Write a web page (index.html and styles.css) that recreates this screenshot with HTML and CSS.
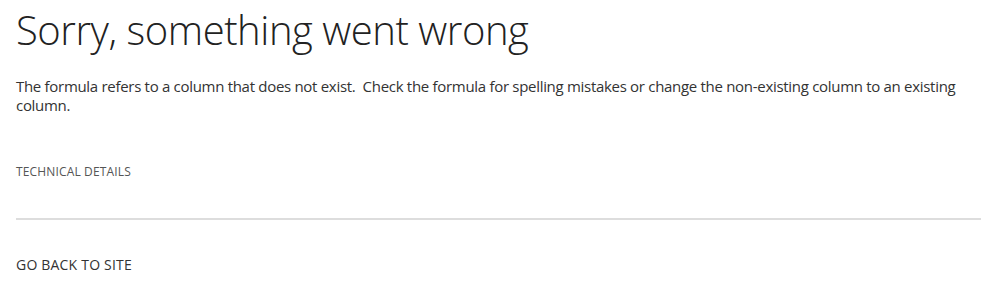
FILE: index.html
```html
<!DOCTYPE html>
<html lang="en">
<head>
<meta charset="utf-8">
<title>Error</title>
<link rel="stylesheet" href="styles.css">
</head>
<body>
<div class="page">
  <h1 class="title">Sorry, something went wrong</h1>
  <p class="message">The formula refers to a column that does not exist.&nbsp; Check the formula for spelling mistakes or change the non-existing column to an existing column.</p>
  <div class="details">TECHNICAL DETAILS</div>
  <div class="divider"></div>
  <a class="back" href="#">GO BACK TO SITE</a>
</div>
</body>
</html>
```
FILE: styles.css
```css
html, body {
  margin: 0;
  padding: 0;
  background: #ffffff;
}
.page {
  padding: 0 17px 0 16px;
  font-family: "Open Sans", "Noto Sans", sans-serif;
  color: #333333;
}
.title {
  margin: 0;
  padding-top: 3px;
  font-family: "Open Sans", sans-serif;
  font-weight: 300;
  font-size: 40px;
  line-height: 54px;
  color: #222222;
  letter-spacing: -0.45px;
}
.message {
  margin: 20px 0 0 0;
  font-size: 15px;
  line-height: 19px;
  color: #333333;
  letter-spacing: -0.3px;
}
.details {
  margin-top: 49px;
  font-size: 12px;
  line-height: 16px;
  color: #555555;
  letter-spacing: 0.15px;
}
.divider {
  margin-top: 38px;
  height: 2px;
  background: #dddddd;
}
.back {
  display: block;
  margin-top: 35px;
  font-size: 14px;
  line-height: 20px;
  color: #333333;
  text-decoration: none;
  letter-spacing: 0.2px;
}
```
